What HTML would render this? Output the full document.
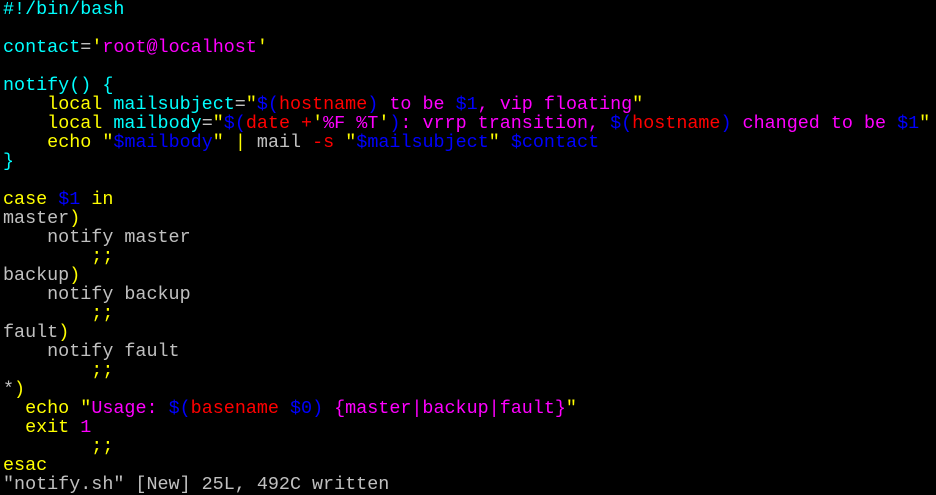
<!DOCTYPE html>
<html><head><meta charset="utf-8"><style>
html,body{margin:0;padding:0;background:#000;width:936px;height:495px;overflow:hidden}
pre{margin:0;padding:0 0 0 3px;position:relative;top:0px;font-family:"Liberation Mono",monospace;font-size:18.4px;line-height:19px;color:#c0c0c0;white-space:pre}
.c{color:#00ffff}.y{color:#ffff00}.m{color:#ff00ff}.b{color:#0000ff}.r{color:#ff0000}.g{color:#c0c0c0}
</style></head><body><pre><span class="c">#!/bin/bash</span>

<span class="c">contact</span><span class="g">=</span><span class="y">'</span><span class="m">root@localhost</span><span class="y">'</span>

<span class="c">notify() {</span>
    <span class="y">local</span> <span class="c">mailsubject</span><span class="g">=</span><span class="y">"</span><span class="b">$(</span><span class="r">hostname</span><span class="b">)</span><span class="m"> to be </span><span class="b">$1</span><span class="m">, vip floating</span><span class="y">"</span>
    <span class="y">local</span> <span class="c">mailbody</span><span class="g">=</span><span class="y">"</span><span class="b">$(</span><span class="r">date +</span><span class="y">'</span><span class="m">%F %T</span><span class="y">'</span><span class="b">)</span><span class="m">: vrrp transition, </span><span class="b">$(</span><span class="r">hostname</span><span class="b">)</span><span class="m"> changed to be </span><span class="b">$1</span><span class="y">"</span>
    <span class="y">echo</span> <span class="y">"</span><span class="b">$mailbody</span><span class="y">"</span> <span class="y">|</span> <span class="g">mail</span> <span class="r">-s</span> <span class="y">"</span><span class="b">$mailsubject</span><span class="y">"</span> <span class="b">$contact</span>
<span class="c">}</span>

<span class="y">case</span> <span class="b">$1</span> <span class="y">in</span>
master<span class="y">)</span>
    notify master
        <span class="y">;;</span>
backup<span class="y">)</span>
    notify backup
        <span class="y">;;</span>
fault<span class="y">)</span>
    notify fault
        <span class="y">;;</span>
*<span class="y">)</span>
  <span class="y">echo</span> <span class="y">"</span><span class="m">Usage: </span><span class="b">$(</span><span class="r">basename </span><span class="b">$0)</span><span class="m"> {master|backup|fault}</span><span class="y">"</span>
  <span class="y">exit</span> <span class="m">1</span>
        <span class="y">;;</span>
<span class="y">esac</span>
"notify.sh" [New] 25L, 492C written</pre></body></html>
